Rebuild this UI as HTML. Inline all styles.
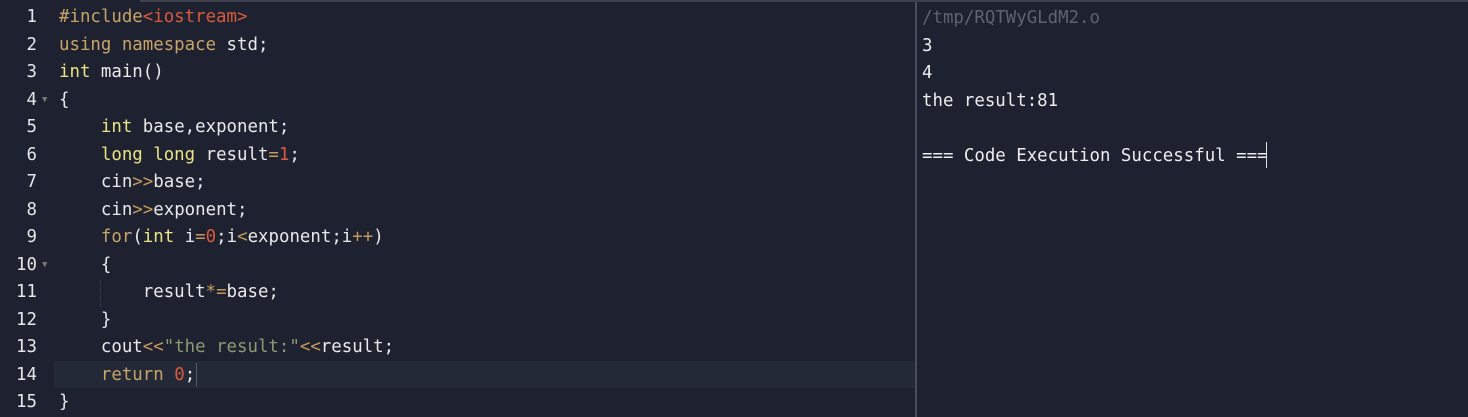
<!DOCTYPE html>
<html><head><style>
html,body{margin:0;padding:0;background:#1d2130;width:1468px;height:417px;overflow:hidden}
body{font-family:"DejaVu Sans Mono","Liberation Mono",monospace;font-size:17.4px;color:#e9e9e9}
.top{position:absolute;left:140px;top:0;width:1328px;height:2px;background:#3d404c}
.div{position:absolute;left:915px;top:2px;width:2px;height:415px;background:#484b5c}
.hl{position:absolute;left:54px;top:361px;width:861px;height:27px;background:#242938}
.code{position:absolute;left:0;top:4px}
.l{height:27.5px;line-height:27.5px;white-space:pre;position:relative}
.n{position:absolute;right:0;width:37px;text-align:right;left:0;color:#e6e6e6}
.t{position:absolute;left:59px}
.f{position:absolute;left:42px;top:0;color:#777;font-size:9px}
.k{color:#c9a467}.y{color:#ece484}.r{color:#d9593d}.o{color:#c59a5c}.s{color:#8e9a72}
.out{position:absolute;left:922px;top:5px}
.out .l{color:#ededed}
.out .g{color:#5f6270}
.guide{position:absolute;left:100px;top:280px;height:27px;border-left:1px dotted #444856}
.cur{position:absolute;left:196px;top:363px;width:1px;height:24px;background:#555a66}
.cur2{position:absolute;left:1266px;top:142px;width:1px;height:26px;background:#ddd}
</style></head><body>
<div class="top"></div>
<div class="hl"></div>
<div class="div"></div>
<div class="guide"></div>
<div class="cur"></div>
<div class="cur2"></div>
<div class="code">
<div class="l"><span class="n">1</span><span class="t"><span class="k">#include</span><span class="r">&lt;iostream&gt;</span></span></div>
<div class="l"><span class="n">2</span><span class="t"><span class="k">using namespace</span> std;</span></div>
<div class="l"><span class="n">3</span><span class="t"><span class="y">int</span> main()</span></div>
<div class="l"><span class="n">4</span><span class="f">▼</span><span class="t">{</span></div>
<div class="l"><span class="n">5</span><span class="t">    <span class="y">int</span> base,exponent;</span></div>
<div class="l"><span class="n">6</span><span class="t">    <span class="y">long long</span> result<span class="o">=</span><span class="r">1</span>;</span></div>
<div class="l"><span class="n">7</span><span class="t">    cin<span class="o">&gt;&gt;</span>base;</span></div>
<div class="l"><span class="n">8</span><span class="t">    cin<span class="o">&gt;&gt;</span>exponent;</span></div>
<div class="l"><span class="n">9</span><span class="t">    <span class="k">for</span>(<span class="y">int</span> i<span class="o">=</span><span class="r">0</span>;i<span class="o">&lt;</span>exponent;i<span class="o">++</span>)</span></div>
<div class="l"><span class="n">10</span><span class="f">▼</span><span class="t">    {</span></div>
<div class="l"><span class="n">11</span><span class="t">        result<span class="o">*=</span>base;</span></div>
<div class="l"><span class="n">12</span><span class="t">    }</span></div>
<div class="l"><span class="n">13</span><span class="t">    cout<span class="o">&lt;&lt;</span><span class="s">"the result:"</span><span class="o">&lt;&lt;</span>result;</span></div>
<div class="l"><span class="n">14</span><span class="t">    <span class="k">return</span> <span class="r">0</span>;</span></div>
<div class="l"><span class="n">15</span><span class="t">}</span></div>
</div>
<div class="out">
<div class="l g">/tmp/RQTWyGLdM2.o</div>
<div class="l">3</div>
<div class="l">4</div>
<div class="l">the result:81</div>
<div class="l"> </div>
<div class="l">=== Code Execution Successful ===</div>
</div>
</body></html>
